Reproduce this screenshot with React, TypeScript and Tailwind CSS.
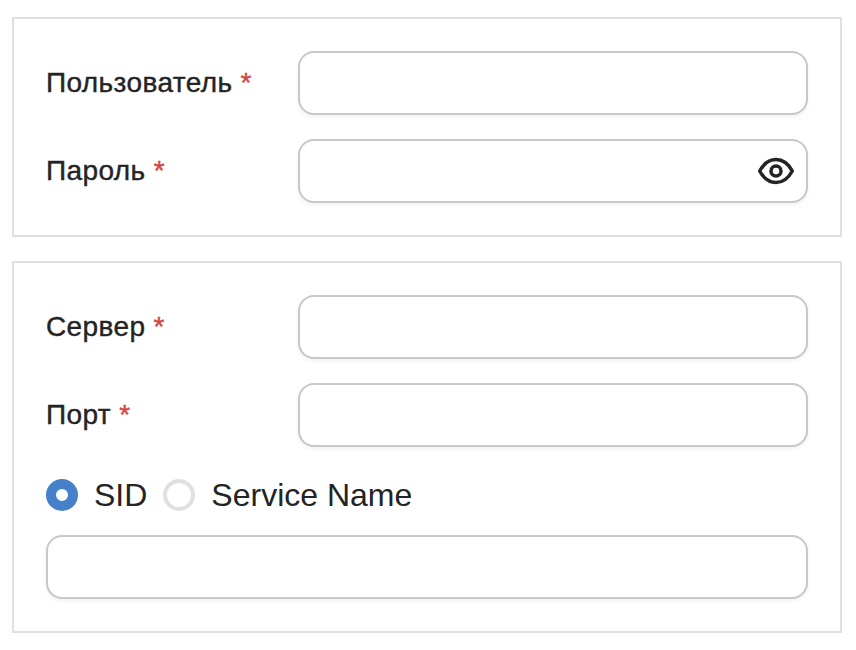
const box = "h-16 rounded-[16px] border-2 border-[#c8c8c8] bg-white shadow-[0_2px_4px_rgba(0,0,0,0.06)] outline-none";

function Field({ label, password = false }: { label: string; password?: boolean }) {
  return (
    <div className="flex items-center">
      <label className="w-[252px] text-[28px] leading-8 tracking-[0.39px] [-webkit-text-stroke:0.4px_#242424]">
        {label} <span className="text-[#d64541] [-webkit-text-stroke:0.4px_#d64541]">*</span>
      </label>
      <div className={`flex w-[510px] items-center justify-end pr-[10px] ${box}`}>
        {password && (
          <svg width="40" height="40" viewBox="0 0 40 40" fill="none" stroke="#242424" strokeWidth="3.5">
            <path d="M3.7 20C7.800 12.400 13.500 8.500 20 8.500S32.200 12.400 36.300 20C32.200 27.600 26.500 31.500 20 31.500S7.800 27.600 3.700 20Z" strokeLinejoin="round" />
            <circle cx="20" cy="20" r="5" />
          </svg>
        )}
      </div>
    </div>
  );
}

export default function App() {
  return (
    <main className="flex h-[650px] w-[856px] flex-col gap-6 bg-white pt-[17px] pl-3 font-['Liberation_Sans',Arial,sans-serif] text-[#242424]">
      <section className="flex h-[220px] w-[830px] flex-col gap-6 border-2 border-[#e0e0e0] p-8">
        <Field label="Пользователь" />
        <Field label="Пароль" password />
      </section>
      <section className="flex h-[372px] w-[830px] flex-col border-2 border-[#e0e0e0] p-8">
        <div className="flex flex-col gap-6">
          <Field label="Сервер" />
          <Field label="Порт" />
        </div>
        <div className="mt-6 mb-4 flex h-12 items-center text-[32px] leading-[48px]">
          <span className="h-8 w-8 rounded-full border-[10px] border-[#4680c8] bg-white" />
          <span className="ml-4">SID</span>
          <span className="ml-4 h-8 w-8 rounded-full border-4 border-[#e0e0e0]" />
          <span className="ml-4">Service Name</span>
        </div>
        <div className={`w-full shrink-0 ${box}`} />
      </section>
    </main>
  );
}
